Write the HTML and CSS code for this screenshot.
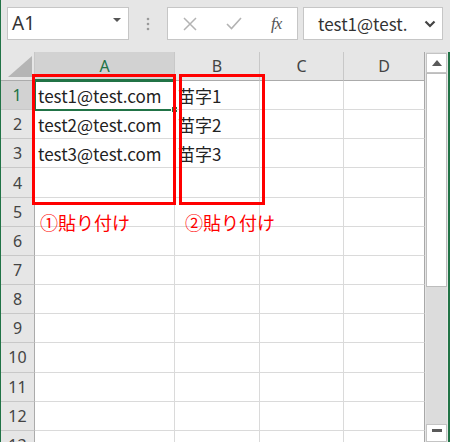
FILE: index.html
```html
<!DOCTYPE html>
<html lang="ja">
<head>
<meta charset="utf-8">
<link rel="stylesheet" href="styles.css">
</head>
<body>
<div class="app">
  <div class="topbar">
    <div class="namebox">
      <span class="nb-text">A1</span>
      <svg class="nb-caret" width="8" height="5" viewBox="0 0 8 5"><path d="M0 0h8L4 4z" fill="#555"/></svg>
    </div>
    <div class="dots">
      <svg width="4" height="14" viewBox="0 0 4 14"><circle cx="2" cy="2" r="1.3" fill="#9a9a9a"/><circle cx="2" cy="7" r="1.3" fill="#9a9a9a"/><circle cx="2" cy="12" r="1.3" fill="#9a9a9a"/></svg>
    </div>
    <div class="fbtns">
      <svg class="fb-x" width="14" height="14" viewBox="0 0 14 14"><path d="M1 1L13 13M13 1L1 13" stroke="#b3b3b3" stroke-width="1.5"/></svg>
      <svg class="fb-ok" width="16" height="13" viewBox="0 0 16 13"><path d="M1 7l4.5 4.5L15 1" stroke="#b3b3b3" stroke-width="1.6" fill="none"/></svg>
      <span class="fb-fx">fx</span>
    </div>
    <div class="fcontent">
      <span class="fc-text">test1@test.</span>
      <svg class="fc-chev" width="12" height="8" viewBox="0 0 12 8"><path d="M1.5 1.5L6 6l4.5-4.5" stroke="#444" stroke-width="2.2" fill="none"/></svg>
    </div>
  </div>

  <div class="sheet">
    <div class="grid">
      <div class="hdr corner"><svg width="24" height="21" viewBox="0 0 24 21"><path d="M24 0V21H0z" fill="#b5b5b5"/></svg></div>
      <div class="hdr col sel">A</div>
      <div class="hdr col">B</div>
      <div class="hdr col">C</div>
      <div class="hdr col last">D</div>

      <div class="hdr row sel">1</div>
      <div class="cell active">test1@test.com</div>
      <div class="cell">苗字1</div>
      <div class="cell"></div>
      <div class="cell last"></div>

      <div class="hdr row">2</div>
      <div class="cell">test2@test.com</div>
      <div class="cell">苗字2</div>
      <div class="cell"></div>
      <div class="cell last"></div>

      <div class="hdr row">3</div>
      <div class="cell">test3@test.com</div>
      <div class="cell">苗字3</div>
      <div class="cell"></div>
      <div class="cell last"></div>

      <div class="hdr row">4</div>
      <div class="cell"></div><div class="cell"></div><div class="cell"></div><div class="cell last"></div>
      <div class="hdr row">5</div>
      <div class="cell"></div><div class="cell"></div><div class="cell"></div><div class="cell last"></div>
      <div class="hdr row">6</div>
      <div class="cell"></div><div class="cell"></div><div class="cell"></div><div class="cell last"></div>
      <div class="hdr row">7</div>
      <div class="cell"></div><div class="cell"></div><div class="cell"></div><div class="cell last"></div>
      <div class="hdr row">8</div>
      <div class="cell"></div><div class="cell"></div><div class="cell"></div><div class="cell last"></div>
      <div class="hdr row">9</div>
      <div class="cell"></div><div class="cell"></div><div class="cell"></div><div class="cell last"></div>
      <div class="hdr row">10</div>
      <div class="cell"></div><div class="cell"></div><div class="cell"></div><div class="cell last"></div>
      <div class="hdr row">11</div>
      <div class="cell"></div><div class="cell"></div><div class="cell"></div><div class="cell last"></div>
      <div class="hdr row">12</div>
      <div class="cell"></div><div class="cell"></div><div class="cell"></div><div class="cell last"></div>
      <div class="hdr row">13</div>
      <div class="cell"></div><div class="cell"></div><div class="cell"></div><div class="cell last"></div>
    </div>

    <div class="vscroll">
      <div class="sb-btn up"><svg width="10" height="6" viewBox="0 0 10 6"><path d="M0 6L5 0l5 6z" fill="#5a5a5a"/></svg></div>
      <div class="sb-thumb"></div>
      <div class="sb-track"></div>
      <div class="sb-btn down"><svg width="10" height="6" viewBox="0 0 10 6"><path d="M0 0h10v3H0z" fill="#5a5a5a"/></svg></div>
    </div>
    <div class="edge"></div>

    <div class="mark mark-a"></div>
    <div class="mark mark-b"></div>
    <div class="note note-a">①貼り付け</div>
    <div class="note note-b">②貼り付け</div>
  </div>
</div>
</body>
</html>
```

FILE: styles.css
```css
html, body {
  margin: 0;
  padding: 0;
  background: #e6e6e6;
}
.app {
  width: 450px;
  height: 442px;
  overflow: hidden;
  position: relative;
  background: #e6e6e6;
  border-left: 1px solid #217346;
  box-sizing: border-box;
  font-family: "Noto Sans CJK JP", "Noto Sans", sans-serif;
}
.topbar {
  height: 52px;
  display: flex;
  align-items: flex-start;
  padding-top: 7px;
  box-sizing: border-box;
}
.namebox {
  margin-left: 6px;
  width: 122px;
  height: 33px;
  box-sizing: border-box;
  background: #fff;
  border: 1px solid #c6c6c6;
  display: flex;
  align-items: center;
  justify-content: space-between;
  padding: 0 7px 0 4px;
}
.nb-text {
  font-family: "Noto Sans", sans-serif;
  font-size: 19px;
  color: #333;
  line-height: 1;
}
.nb-caret { margin-bottom: 6px; }
.dots {
  width: 38px;
  height: 33px;
  display: flex;
  align-items: center;
  justify-content: center;
}
.fbtns {
  width: 131px;
  height: 33px;
  box-sizing: border-box;
  background: #fff;
  border: 1px solid #c6c6c6;
  display: flex;
  align-items: center;
  padding-left: 15px;
}
.fb-x { margin-right: 29px; }
.fb-ok { margin-right: 29px; }
.fb-fx {
  font-family: "Liberation Serif", serif;
  font-style: italic;
  font-size: 17px;
  color: #555;
  letter-spacing: -1px;
}
.fcontent {
  margin-left: 5px;
  width: 140px;
  height: 33px;
  box-sizing: border-box;
  background: #fff;
  border: 1px solid #c6c6c6;
  display: flex;
  align-items: center;
  justify-content: space-between;
  padding: 0 6px 0 14px;
}
.fc-text {
  font-size: 17px;
  color: #333;
  line-height: 1;
}

.sheet {
  position: relative;
  display: flex;
  height: 390px;
}
.grid {
  display: grid;
  grid-template-columns: 34px 140px 85px 84px 81px;
  grid-template-rows: 29px;
  grid-auto-rows: 29.17px;
  background: #fff;
  align-content: start;
}
.hdr {
  background: #e6e6e6;
  color: #444;
  font-family: "Noto Sans", sans-serif;
  font-size: 16px;
  display: flex;
  align-items: center;
  justify-content: center;
  box-sizing: border-box;
}
.corner {
  border-right: 1px solid #c8c8c8;
  border-bottom: 1px solid #ababab;
  align-items: flex-end;
  justify-content: flex-end;
  padding: 0 2px 3px 0;
}
.corner svg { display: block; }
.col {
  border-right: 1px solid #c8c8c8;
  border-bottom: 1px solid #ababab;
}
.col.last { border-right: 1px solid #a8a8a8; }
.row {
  border-right: 1px solid #ababab;
  border-bottom: 1px solid #c8c8c8;
}
.hdr.sel {
  background: #d2d2d2;
  color: #217346;
}
.col.sel { border-bottom: 2px solid #217346; }
.row.sel { border-right: 2px solid #217346; }
.cell {
  border-right: 1px solid #dadada;
  border-bottom: 1px solid #dadada;
  box-sizing: border-box;
  font-size: 17px;
  color: #222;
  display: flex;
  align-items: center;
  padding-left: 3px;
  white-space: nowrap;
  position: relative;
}
.cell.last { border-right: 1px solid #a8a8a8; }
.cell.active {
  outline: 2px solid #217346;
  outline-offset: -1px;
}
.cell.active::after {
  content: "";
  position: absolute;
  right: -4px;
  bottom: -4px;
  width: 5px;
  height: 5px;
  background: #217346;
  border: 1px solid #fff;
}

.vscroll {
  width: 21px;
  margin-left: 1px;
  display: flex;
  flex-direction: column;
  background: #dcdcdc;
}
.sb-btn {
  height: 20px;
  background: #fff;
  border: 1px solid #c4c4c4;
  box-sizing: border-box;
  display: flex;
  align-items: center;
  justify-content: center;
}
.sb-btn.up { margin-top: 1px; }
.sb-thumb {
  height: 214px;
  background: #fff;
  border: 1px solid #bdbdbd;
  box-sizing: border-box;
}
.sb-track { flex: 1; }
.sb-btn.down { height: 18px; align-items: flex-start; padding-top: 4px; }
.edge {
  flex: 1;
  border-right: 2px solid #217346;
}

.mark {
  position: absolute;
  border: 3px solid #ff0000;
  box-sizing: border-box;
  top: 22px;
  height: 131px;
}
.mark-a { left: 31px; width: 144px; }
.mark-b { left: 178px; width: 86px; }
.note {
  position: absolute;
  top: 161px;
  font-size: 18px;
  color: #ff0000;
  line-height: 1;
  white-space: nowrap;
}
.note-a { left: 39px; }
.note-b { left: 184px; }
```
